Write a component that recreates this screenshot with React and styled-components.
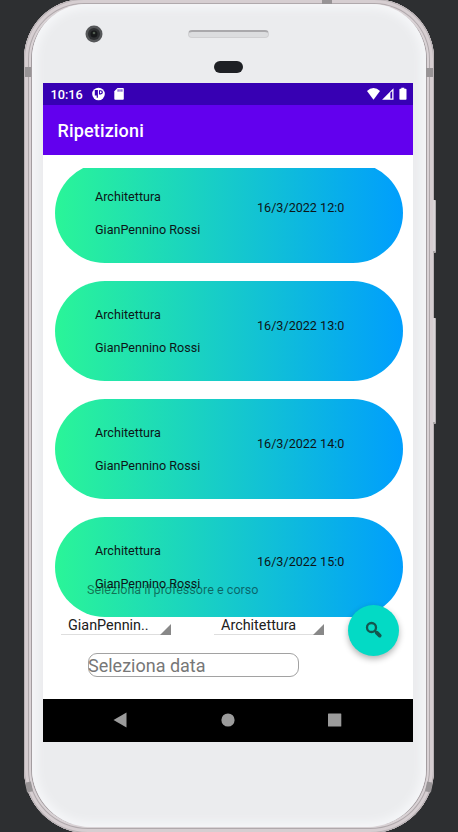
import React from "react";
import styled, { createGlobalStyle } from "styled-components";

const GlobalStyle = createGlobalStyle`
  * { box-sizing: border-box; }
  html, body { margin: 0; height: 100%; overflow: hidden; background: #2d2f31; }
  body { font-family: Roboto, "Noto Sans", sans-serif; }
`;

const Backdrop = styled.main`
  height: 832px;
  width: 458px;
  overflow: hidden;
  background: #2d2f31;
`;

const Phone = styled.div`
  position: relative;
  width: 410px;
  height: 834px;
  margin: -1px 0 0 24px;
  padding: 5px 8px 6px;
  border-radius: 60px 60px 64px 64px;
  background: #d3cbce;
  box-shadow: inset 0 0 0 1px #b9b2b5, inset 0 0 0 4px #d6ced1,
    inset 0 0 0 5px #b0a9ac, inset 0 0 0 7px #d9d2d5, inset 0 0 0 8px #a39da0;
`;

const Face = styled.div`
  height: 100%;
  padding: 0 12px 0 11px;
  border-radius: 55px 55px 59px 59px;
  background: #ebecee;
  box-shadow: inset 0 0 8px 5px #f5f6f8;
`;

const SideKey = styled.i`
  position: absolute;
  left: 409px;
  top: ${(p) => p.$top}px;
  width: 3px;
  height: ${(p) => p.$height}px;
  border-radius: 0 1px 1px 0;
  background: #d8d4d6;
  border-right: 1px solid #b1adaf;
  border-bottom: 2px solid #aaa6a8;
`;

const Antenna = styled.i`
  position: absolute;
  left: ${(p) => p.$left}px;
  top: ${(p) => p.$top}px;
  width: ${(p) => p.$width}px;
  height: ${(p) => p.$height}px;
  background: #989496;
  transform: rotate(${(p) => p.$tilt || 0}deg);
`;

const Bezel = styled.header`
  height: 79px;
  display: grid;
  grid-template-columns: 145px 81px 1fr;
  grid-template-rows: 57px 22px;
`;

const Camera = styled.svg`
  width: 18px;
  height: 18px;
  margin: 21px 0 0 42.4px;
`;

const Speaker = styled.div`
  height: 8px;
  margin-top: 26px;
  border: 1px solid #d0d0d2;
  border-top: 2px solid #aaa9ac;
  border-radius: 4px;
  background: #dcdddf;
`;

const Sensor = styled.div`
  grid-row: 2;
  grid-column: 2;
  width: 29px;
  height: 12px;
  margin-left: 25.5px;
  border-radius: 6px;
  background: #1e2024;
`;

const Screen = styled.section`
  width: 370px;
  height: 659px;
  display: grid;
  grid-template-rows: 22px 50px 544px 43px;
  background: #fff;
`;

const StatusBar = styled.div`
  display: flex;
  align-items: center;
  padding: 0 6px 0 7.5px;
  background: #3700b3;
  color: #fff;
`;

const Clock = styled.span`
  width: 41.5px;
  font-size: 12.7px;
  font-weight: 500;
  line-height: 23px;
`;

const StatusIcon = styled.svg`
  width: ${(p) => p.$width}px;
  height: 14px;
  margin-left: ${(p) => p.$gap || 0}px;
  fill: #fff;
`;

const Spacer = styled.div`
  flex: 1;
`;

const AppBar = styled.h1`
  margin: 0;
  padding: 1px 0 0 14.5px;
  background: #6200ee;
  color: #fff;
  font-size: 18px;
  font-weight: 500;
  letter-spacing: 0.15px;
  line-height: 50px;
`;

const Content = styled.div`
  display: grid;
  grid-template: 1fr / 1fr;
`;

const Lessons = styled.ul`
  grid-area: 1 / 1;
  list-style: none;
  margin: 13px 0 0;
  padding: 0 10.5px 0 12px;
  height: 448.5px;
  overflow: hidden;
  display: flex;
  flex-direction: column;
  justify-content: flex-end;
  gap: 18.4px;
`;

const LessonCard = styled.li`
  flex: none;
  height: 99.6px;
  display: grid;
  grid-template-columns: 202px 1fr;
  border-radius: 50px;
  background: linear-gradient(90deg, #2af598 0%, #16cacb 50%, #009efd 100%);
  color: #0c1517;
  font-size: 12.6px;
  line-height: 16px;
`;

const LessonInfo = styled.div`
  display: flex;
  flex-direction: column;
  gap: 16.6px;
  padding: 26.4px 0 0 40px;
  white-space: nowrap;
`;

const LessonDate = styled.time`
  padding-top: 37.4px;
`;

const SearchForm = styled.form`
  grid-area: 1 / 1;
  align-self: end;
  height: 117px;
  display: grid;
  grid-template-columns: 287px 1fr;
  z-index: 1;
`;

const Fields = styled.div`
  display: flex;
  flex-direction: column;
`;

const Hint = styled.p`
  margin: 0 0 0 44px;
  height: 16px;
  font-size: 12.6px;
  line-height: 16px;
  color: rgba(0, 0, 0, 0.5);
`;

const Spinners = styled.div`
  display: flex;
  gap: 43px;
  margin: 18px 0 0 18px;
`;

const Spinner = styled.div`
  width: 110px;
  height: 19px;
  display: flex;
  justify-content: space-between;
  align-items: flex-end;
  padding-left: 7px;
  border-bottom: 1px solid #dedede;
  font-size: 14.4px;
  line-height: 16px;
  color: #202020;
  white-space: nowrap;
`;

const Corner = styled.svg`
  width: 11px;
  height: 11px;
  margin-bottom: -1px;
  fill: #888;
`;

const DateInput = styled.div`
  width: 211px;
  height: 24px;
  margin: 18px 0 0 45px;
  border: 1px solid #a2a2a2;
  border-radius: 9px;
  color: #777;
  font-size: 18px;
  line-height: 24px;
  text-indent: -1px;
`;

const Fab = styled.button`
  width: 51px;
  height: 51px;
  margin: 22.5px 0 0 18px;
  padding: 0;
  border: 0;
  border-radius: 50%;
  display: grid;
  place-items: center;
  background: #03dac5;
  box-shadow: 0 3px 6px rgba(0, 0, 0, 0.3);
`;

const NavBar = styled.nav`
  display: grid;
  grid-template-columns: 154px 62px 154px;
  place-items: center;
  background: #000;
`;

const NavIcon = styled.svg`
  width: 16px;
  height: 16px;
  margin-bottom: 1px;
  fill: #9b9b9b;
`;

const hours = ["12:0", "13:0", "14:0", "15:0"];

function Picker({ value }) {
  return (
    <Spinner>
      {value}
      <Corner viewBox="0 0 11 11"><path d="M11 0v11H0z" /></Corner>
    </Spinner>
  );
}

export default function App() {
  return (
    <>
      <GlobalStyle />
      <Backdrop>
        <Phone>
          <Face>
            <Bezel>
              <Camera viewBox="0 0 18 18">
                <circle cx="9" cy="9" r="8.5" fill="#555759" />
                <circle cx="9" cy="9" r="6" fill="#2e3032" />
                <circle cx="9" cy="9" r="3.5" fill="#17191a" />
                <circle cx="9" cy="8" r="1.3" fill="#505b50" />
              </Camera>
              <Speaker />
              <Sensor />
            </Bezel>
            <Screen>
              <StatusBar>
                <Clock>10:16</Clock>
                <StatusIcon $width={13} viewBox="0 0 13 14">
                  <circle cx="6.5" cy="7" r="6.3" />
                  <path fill="#3700b3" fillRule="evenodd" d="M2.8 3h3.1v7.8H4.7V8.4H2.8zM7 3.2h1.8a2.1 2.1 0 0 1 0 4.2H7zM8 4.3v1.9h.7a.9.9 0 0 0 0-1.9z" />
                </StatusIcon>
                <StatusIcon $width={10} $gap={8.5} viewBox="0 0 10 14">
                  <path d="M3.5 1H9q.8 0 .8.8v10q0 1-.9 1H1.2q-.9 0-.9-1V4.3z" />
                  <path stroke="#3700b3" strokeWidth=".9" d="M4.1 2.3v2.4M6 2.3v2.4M7.9 2.3v2.4" />
                </StatusIcon>
                <Spacer />
                <StatusIcon $width={13} viewBox="0 0 13 14">
                  <path d="M0 3.9Q3 1.1 6.5 1.1T13 3.9L6.5 12.7z" />
                </StatusIcon>
                <StatusIcon $width={12} $gap={1.5} viewBox="0 0 12 14">
                  <path fillRule="evenodd" d="M11.5 1.3v11.4H.1zM8.4 5.8v5.7h1.8V4z" />
                </StatusIcon>
                <StatusIcon $width={8} $gap={5.5} viewBox="0 0 8 14">
                  <path d="M2.3.8h3v1h1.4q.8 0 .8.8v9.3q0 .8-.8.8H1.2q-.8 0-.8-.8V2.6q0-.8.8-.8h1.1z" />
                </StatusIcon>
              </StatusBar>
              <AppBar>Ripetizioni</AppBar>
              <Content>
                <Lessons>
                  {hours.map((hour) => (
                    <LessonCard key={hour}>
                      <LessonInfo>
                        <span>Architettura</span>
                        <span>GianPennino Rossi</span>
                      </LessonInfo>
                      <LessonDate>16/3/2022 {hour}</LessonDate>
                    </LessonCard>
                  ))}
                </Lessons>
                <SearchForm>
                  <Fields>
                    <Hint>Seleziona il professore e corso</Hint>
                    <Spinners>
                      <Picker value="GianPennin.." />
                      <Picker value="Architettura" />
                    </Spinners>
                    <DateInput>Seleziona data</DateInput>
                  </Fields>
                  <Fab type="button" aria-label="Cerca">
                    <svg width="18" height="18" viewBox="0 0 18 18" fill="none" stroke="#14564f">
                      <circle cx="6.5" cy="6.5" r="4.5" strokeWidth="2.3" />
                      <path d="M9.7 9.7l2 2" strokeWidth="2" />
                      <path d="M11.7 11.7l3 2.9" strokeWidth="3.8" strokeLinecap="round" />
                    </svg>
                  </Fab>
                </SearchForm>
              </Content>
              <NavBar>
                <NavIcon viewBox="0 0 16 16"><path d="M14.5.5v15L1.5 8z" /></NavIcon>
                <NavIcon viewBox="0 0 16 16"><circle cx="8" cy="8" r="6.6" /></NavIcon>
                <NavIcon viewBox="0 0 16 16"><rect x="0" y="1.5" width="13.3" height="13" rx=".5" /></NavIcon>
              </NavBar>
            </Screen>
          </Face>
          <SideKey $top={201} $height={53} />
          <SideKey $top={319} $height={106} />
          <Antenna $left={298} $top={1} $width={10} $height={4} />
          <Antenna $left={1} $top={68} $width={6} $height={10} />
          <Antenna $left={402} $top={69} $width={7} $height={9} />
          <Antenna $left={2} $top={783} $width={6} $height={10} $tilt={-12} />
          <Antenna $left={402} $top={783} $width={6} $height={10} $tilt={12} />
        </Phone>
      </Backdrop>
    </>
  );
}
